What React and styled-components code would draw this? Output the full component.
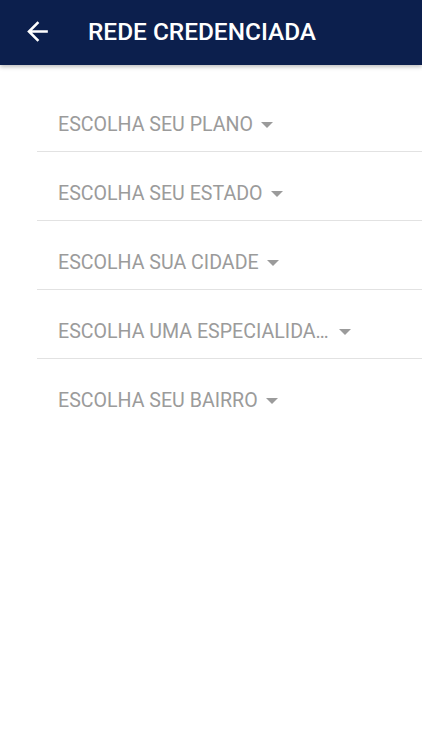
import React from "react";
import styled, { createGlobalStyle } from "styled-components";

const GlobalStyle = createGlobalStyle`
  html, body {
    margin: 0;
    padding: 0;
    background: #ffffff;
    font-family: Roboto, "Liberation Sans", sans-serif;
  }
`;

const Screen = styled.div`
  width: 422px;
  height: 750px;
  background: #ffffff;
  overflow: hidden;
`;

const Header = styled.header`
  height: 65px;
  background: #0c1f4d;
  display: flex;
  align-items: center;
  padding-left: 22px;
  padding-bottom: 2px;
  box-sizing: border-box;
  box-shadow: 0 2px 4px rgba(0, 0, 0, 0.25);
  position: relative;
`;

const BackButton = styled.button`
  background: none;
  border: none;
  padding: 0;
  width: 31px;
  height: 31px;
  display: flex;
  align-items: center;
  justify-content: center;
  cursor: pointer;
`;

const Title = styled.h1`
  margin: 0 0 0 35px;
  color: #ffffff;
  font-size: 24.4px;
  font-weight: 500;
  letter-spacing: 0;
`;

const List = styled.div`
  margin-top: 18px;
  padding-left: 37px;
`;

const Row = styled.div`
  display: flex;
  align-items: center;
  padding: 30px 0 14px 21px;
  border-bottom: ${(p) => (p.last ? "none" : "1px solid #e2e2e2")};
  cursor: pointer;
`;

const Label = styled.span`
  font-size: 19.6px;
  line-height: 24px;
  color: #9b9b9b;
  white-space: nowrap;
  overflow: hidden;
  text-overflow: ellipsis;
  max-width: 273px;
`;

const Caret = styled.span`
  margin-left: 8px;
  width: 0;
  height: 0;
  border-left: 6px solid transparent;
  border-right: 6px solid transparent;
  border-top: 6px solid #9b9b9b;
`;

const options = [
  "ESCOLHA SEU PLANO",
  "ESCOLHA SEU ESTADO",
  "ESCOLHA SUA CIDADE",
  "ESCOLHA UMA ESPECIALIDADE",
  "ESCOLHA SEU BAIRRO",
];

export default function App() {
  return (
    <Screen>
      <GlobalStyle />
      <Header>
        <BackButton aria-label="Voltar">
          <svg width="31" height="31" viewBox="0 0 24 24">
            <path
              d="M20 11H7.83l5.59-5.59L12 4l-8 8 8 8 1.41-1.41L7.83 13H20v-2z"
              fill="#ffffff"
            />
          </svg>
        </BackButton>
        <Title>REDE CREDENCIADA</Title>
      </Header>
      <List>
        {options.map((o, i) => (
          <Row key={o} last={i === options.length - 1}>
            <Label>{o}</Label>
            <Caret />
          </Row>
        ))}
      </List>
    </Screen>
  );
}
